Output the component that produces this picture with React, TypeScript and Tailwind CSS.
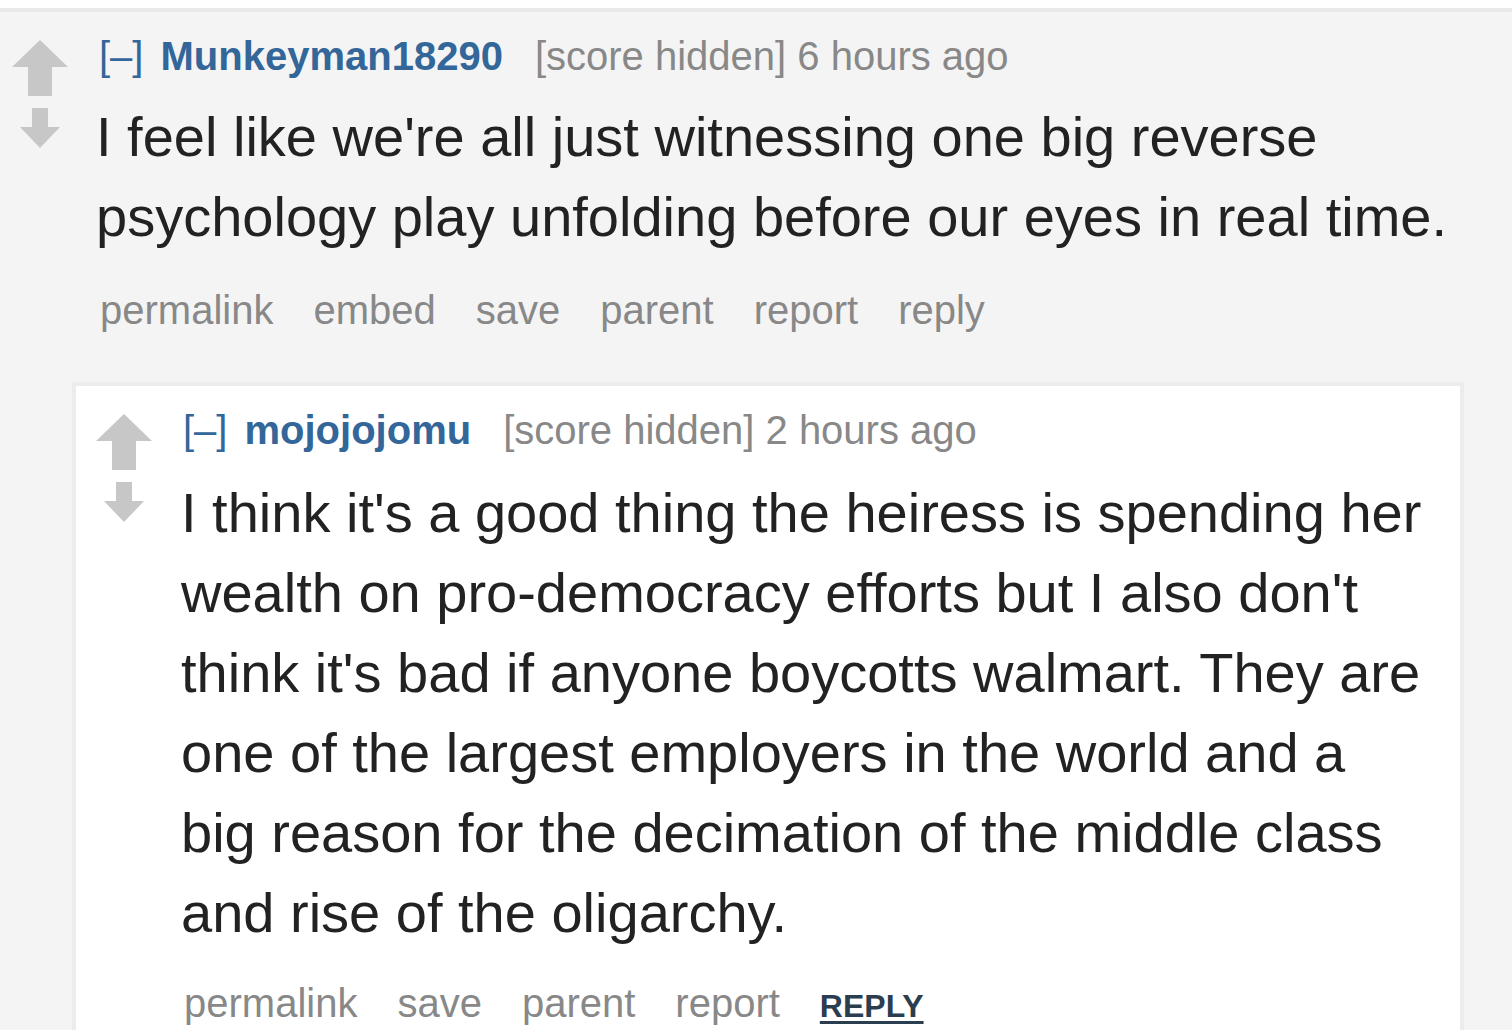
import React from 'react';

const UpArrow = () => (
  <svg width="56" height="56" viewBox="0 0 56 56" className="block">
    <polygon points="28,0 56,27 40,27 40,56 16,56 16,27 0,27" fill="#c7c7c7" />
  </svg>
);

const DownArrow = () => (
  <svg width="40" height="40" viewBox="0 0 40 40" className="block">
    <polygon points="12,0 28,0 28,19 40,19 20,40 0,19 12,19" fill="#c7c7c7" />
  </svg>
);

const Votes = () => (
  <div className="w-[56px] shrink-0 mr-[30px] mt-[8px] flex flex-col items-center">
    <UpArrow />
    <div className="mt-[12px]">
      <DownArrow />
    </div>
  </div>
);

interface HeaderProps {
  author: string;
  age: string;
}

const Header: React.FC<HeaderProps> = ({ author, age }) => (
  <div className="flex items-baseline pl-[1px] text-[40px] leading-[48px] whitespace-nowrap">
    <span className="text-[#336699] mr-[17px]">[–]</span>
    <span className="text-[#336699] font-bold mr-[32px]">{author}</span>
    <span className="text-[#888888]">[score hidden] {age}</span>
  </div>
);

export default function App() {
  return (
    <div className="min-h-screen bg-white pt-[8px] overflow-hidden" style={{ fontFamily: '"Liberation Sans", Arial, sans-serif' }}>
      <div className="border-t-[4px] border-[#e9e9e9] bg-[#f4f4f4] pl-[12px] pr-[48px] pt-[20px] min-h-[1022px]">
        <div className="flex">
          <Votes />
          <div className="flex-1 min-w-0">
            <Header author="Munkeyman18290" age="6 hours ago" />
            <p className="mt-[17px] -ml-[2px] text-[56px] leading-[80px] text-[#222222]">
              I feel like we're all just witnessing one big reverse psychology play unfolding before our eyes in real time.
            </p>
            <div className="mt-[29px] pl-[2px] flex items-baseline gap-[40px] text-[40px] leading-[48px] text-[#888888]">
              <span>permalink</span>
              <span>embed</span>
              <span>save</span>
              <span>parent</span>
              <span>report</span>
              <span>reply</span>
            </div>
          </div>
        </div>

        <div className="ml-[60px] mt-[48px] border-[4px] border-[#ececec] bg-white pl-[20px] pr-[34px] pt-[20px] pb-[40px]">
          <div className="flex">
            <Votes />
            <div className="flex-1 min-w-0">
              <Header author="mojojojomu" age="2 hours ago" />
              <p className="mt-[19px] -ml-[1px] text-[56px] leading-[80px] text-[#222222]">
                I think it's a good thing the heiress is spending her wealth on pro-democracy efforts but I also don't think it's bad if anyone boycotts walmart. They are one of the largest employers in the world and a big reason for the decimation of the middle class and rise of the oligarchy.
              </p>
              <div className="mt-[26px] pl-[2px] flex items-baseline gap-[40px] text-[40px] leading-[48px] text-[#888888]">
                <span>permalink</span>
                <span>save</span>
                <span>parent</span>
                <span>report</span>
                <span className="text-[32px] font-bold text-[#2b3e50] underline decoration-[3px] underline-offset-[4px]">REPLY</span>
              </div>
            </div>
          </div>
        </div>
      </div>
    </div>
  );
}
